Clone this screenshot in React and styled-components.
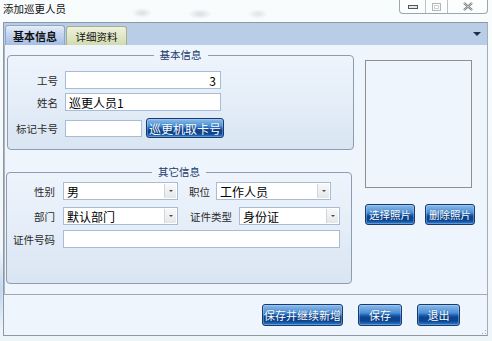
import React from 'react';
import styled, { createGlobalStyle } from 'styled-components';

const Global = createGlobalStyle`
  html, body { margin: 0; padding: 0; }
  body {
    width: 492px; height: 341px; overflow: hidden;
    font-family: "Noto Sans CJK SC", "Noto Sans", sans-serif;
    font-size: 10.5px; color: #1b1b1b;
  }
`;

const Screen = styled.div`
  width: 492px; height: 341px; display: flex; flex-direction: column;
  background:
    radial-gradient(ellipse 10px 5px at 142px 13px, rgba(120,130,140,0.25), transparent),
    radial-gradient(ellipse 12px 5px at 200px 14px, rgba(120,130,140,0.25), transparent),
    radial-gradient(ellipse 10px 5px at 258px 14px, rgba(120,130,140,0.2), transparent),
    radial-gradient(ellipse 4px 40px at 1px 290px, rgba(90,150,220,0.35), transparent),
    linear-gradient(180deg, #f9fcfd 0%, #eef5f9 100%);
`;

const TitleBar = styled.div`
  height: 22px; box-sizing: border-box; padding: 0 4px 0 3px;
  display: flex; justify-content: space-between; align-items: flex-start;
`;

const Title = styled.div`
  font-size: 10.5px; line-height: 14px; margin-top: 2px; color: #111;
`;

const Controls = styled.div`
  display: flex; height: 13px; margin-left: auto;
  border: 1px solid #9ba6b1; border-top: none; border-radius: 0 0 4px 4px;
  overflow: hidden; background: rgba(255,255,255,0.55);
`;

const CtrlBtn = styled.div`
  width: ${p => p.$w}px; display: flex; align-items: center; justify-content: center;
  border-left: ${p => (p.$first ? 'none' : '1px solid #b9c2cb')};
`;

const Window = styled.div`
  margin-left: 3px; width: 485px; height: 314px; box-sizing: border-box;
  border: 1px solid #8d98a4; border-right-color: #a3adb7;
  display: flex; flex-direction: column; background: #eef5fd;
`;

const TabStrip = styled.div`
  height: 22px; flex: none; background: #b9cde6; display: flex; align-items: flex-end;
  padding-left: 1px; padding-right: 6px;
`;

const Tab = styled.div`
  box-sizing: border-box; height: ${p => (p.$active ? 20 : 19)}px; width: ${p => p.$w}px;
  display: flex; align-items: center; justify-content: center;
  border: 1px solid ${p => (p.$active ? '#8da5c8' : '#a7ae8e')}; border-bottom: none;
  border-radius: 3px 3px 0 0;
  background: ${p => (p.$active
    ? 'linear-gradient(180deg, #e6eef9 0%, #c3d4ee 45%, #a5bde6 100%)'
    : 'linear-gradient(180deg, #eff2df 0%, #dfe6c4 55%, #d2dab0 100%)')};
  font-size: ${p => (p.$active ? 11 : 10.5)}px; font-weight: ${p => (p.$active ? 700 : 400)};
  color: #111; margin-right: 1px;
`;

const StripArrow = styled.div`
  margin-left: auto; align-self: center; margin-top: -1px;
  width: 0; height: 0;
  border-left: 4px solid transparent; border-right: 4px solid transparent;
  border-top: 4px solid #1d2d4c;
`;

const TabPage = styled.div`
  height: 250px; flex: none; box-sizing: border-box;
  border-left: 1px solid #aeb4bb; border-bottom: 1px solid #a3a8ae;
  display: flex; align-items: flex-start; background: #eef5fd;
`;

const LeftCol = styled.div`
  display: flex; flex-direction: column; padding: 3px 0 0 1px; width: 349px; flex: none;
`;

const Group = styled.fieldset`
  margin: ${p => p.$mt || 0}px 0 0 ${p => p.$ml || 0}px;
  width: ${p => p.$w}px; box-sizing: border-box; min-width: 0;
  padding: ${p => p.$pt}px 0 ${p => p.$pb}px 0;
  border: 1px solid #8d9caf; border-radius: 4px;
  background: linear-gradient(180deg, #eef4fc 0%, #e4edf8 50%, #d9e5f2 100%);
  display: flex; flex-direction: column;
`;

const Legend = styled.legend`
  margin: 0 auto; padding: 0 6px; font-size: 10.5px; line-height: 14px; color: #22396a;
`;

const Row = styled.div`
  display: flex; align-items: center; height: ${p => p.$h || 18}px; margin-top: ${p => p.$mt || 0}px;
`;

const Label = styled.div`
  width: ${p => p.$w}px; flex: none; text-align: right; font-size: 10.5px; color: #2a2a2a;
  white-space: nowrap;
`;

const SubLabel = styled.div`
  margin-left: ${p => p.$ml}px; width: ${p => p.$w}px; flex: none; font-size: 10.5px; color: #2a2a2a;
  white-space: nowrap;
`;

const TextBox = styled.div`
  box-sizing: border-box; width: ${p => p.$w}px; height: ${p => p.$h || 18}px; margin-left: ${p => p.$ml}px;
  flex: none; background: #fff; border: 1px solid #a9bcd5;
  display: flex; align-items: center; justify-content: ${p => (p.$right ? 'flex-end' : 'flex-start')};
  padding: 0 4px 0 3px; font-size: 12px; color: #000; white-space: nowrap;
`;

const Select = styled.div`
  box-sizing: border-box; width: ${p => p.$w}px; height: 18px; margin-left: ${p => p.$ml}px;
  flex: none; background: #fff; border: 1px solid #a9bcd5;
  display: flex; align-items: stretch; font-size: 12px; color: #000;
`;

const SelectText = styled.div`
  flex: 1; display: flex; align-items: center; padding-left: 3px; white-space: nowrap;
`;

const SelectBtn = styled.div`
  width: 12px; margin: 1px; flex: none; box-sizing: border-box;
  border-left: 1px solid #cfd6df;
  background: linear-gradient(180deg, #f7f8f9 0%, #e4e7eb 100%);
  display: flex; align-items: center; justify-content: center;
  &::after {
    content: ''; width: 0; height: 0;
    border-left: 2.5px solid transparent; border-right: 2.5px solid transparent;
    border-top: 2.5px solid #4a4a4a;
  }
`;

const BlueButton = styled.div`
  box-sizing: border-box; width: ${p => p.$w}px; height: ${p => p.$h || 21}px;
  margin-left: ${p => p.$ml || 0}px; flex: none;
  border: 1px solid #183a70; border-radius: 3px;
  background: linear-gradient(180deg, #8abbe9 0%, #4b8fd6 40%, #1f63b4 50%, #0b4391 62%, #0c468f 80%, #2f7fd0 100%);
  box-shadow: inset 0 0 0 1px rgba(190,220,255,0.35);
  color: #fff; font-size: ${p => p.$fs || 10.5}px;
  display: flex; align-items: center; justify-content: center; white-space: nowrap;
  text-shadow: 0 0 1px rgba(0,30,80,0.6);
`;

const RightCol = styled.div`
  display: flex; flex-direction: column; margin: 15px 0 0 10px;
`;

const Photo = styled.div`
  width: 107px; height: 128px; box-sizing: border-box;
  border: 1px solid #8e8e8e; background: #eef5fd;
`;

const PhotoButtons = styled.div`
  display: flex; gap: 10px; margin-top: 16px;
`;

const BottomBar = styled.div`
  flex: 1; display: flex; align-items: center; justify-content: flex-end;
  padding-right: 27px; gap: 15px; position: relative;
`;

const Grip = styled.svg`
  position: absolute; right: 0; bottom: 0;
`;

export default function App() {
  return (
    <Screen>
      <Global />
      <TitleBar>
        <Title>添加巡更人员</Title>
        <Controls>
          <CtrlBtn $w={25} $first>
            <svg width="10" height="4" viewBox="0 0 10 4"><rect x="0.5" y="0.5" width="9" height="3" fill="#e8e8e8" stroke="#555" /></svg>
          </CtrlBtn>
          <CtrlBtn $w={21}>
            <svg width="9" height="8" viewBox="0 0 9 8"><rect x="0.5" y="0.5" width="8" height="7" fill="none" stroke="#b5b5b5" /><rect x="2.5" y="2.5" width="4" height="3" fill="none" stroke="#cfcfcf" /></svg>
          </CtrlBtn>
          <CtrlBtn $w={39}>
            <svg width="10" height="9" viewBox="0 0 10 9"><path d="M1 1 L9 8 M9 1 L1 8" stroke="#666" strokeWidth="2.2" /><path d="M1 1 L9 8 M9 1 L1 8" stroke="#f4f4f4" strokeWidth="0.8" /></svg>
          </CtrlBtn>
        </Controls>
      </TitleBar>
      <Window>
        <TabStrip>
          <Tab $active $w={60}>基本信息</Tab>
          <Tab $w={61}>详细资料</Tab>
          <StripArrow />
        </TabStrip>
        <TabPage>
          <LeftCol>
            <Group $ml={1} $w={347} $pt={9} $pb={11}>
              <Legend>基本信息</Legend>
              <Row>
                <Label $w={50}>工号</Label>
                <TextBox $ml={7} $w={156} $right>3</TextBox>
              </Row>
              <Row $mt={4}>
                <Label $w={50}>姓名</Label>
                <TextBox $ml={7} $w={156}>巡更人员1</TextBox>
              </Row>
              <Row $mt={7} $h={20}>
                <Label $w={50}>标记卡号</Label>
                <TextBox $ml={7} $w={77} $h={17} />
                <BlueButton $ml={4} $w={78} $h={20} $fs={12}>巡更机取卡号</BlueButton>
              </Row>
            </Group>
            <Group $mt={15} $w={346} $pt={3} $pb={35}>
              <Legend>其它信息</Legend>
              <Row>
                <Label $w={48}>性别</Label>
                <Select $ml={8} $w={115}><SelectText>男</SelectText><SelectBtn /></Select>
                <SubLabel $ml={11} $w={21}>职位</SubLabel>
                <Select $ml={6} $w={115}><SelectText>工作人员</SelectText><SelectBtn /></Select>
              </Row>
              <Row $mt={7}>
                <Label $w={48}>部门</Label>
                <Select $ml={8} $w={115}><SelectText>默认部门</SelectText><SelectBtn /></Select>
                <SubLabel $ml={12} $w={42}>证件类型</SubLabel>
                <Select $ml={7} $w={101}><SelectText>身份证</SelectText><SelectBtn /></Select>
              </Row>
              <Row $mt={5}>
                <Label $w={48}>证件号码</Label>
                <TextBox $ml={8} $w={277} />
              </Row>
            </Group>
          </LeftCol>
          <RightCol>
            <Photo />
            <PhotoButtons>
              <BlueButton $w={50}>选择照片</BlueButton>
              <BlueButton $w={50}>删除照片</BlueButton>
            </PhotoButtons>
          </RightCol>
        </TabPage>
        <BottomBar>
          <BlueButton $w={81} $h={22} $fs={11}>保存并继续新增</BlueButton>
          <BlueButton $w={44} $h={22} $fs={11}>保存</BlueButton>
          <BlueButton $w={43} $h={22} $fs={11}>退出</BlueButton>
          <Grip width="8" height="8" viewBox="0 0 8 8">
            <rect x="6" y="6" width="1" height="1" fill="#9aa" />
            <rect x="3" y="6" width="1" height="1" fill="#9aa" />
            <rect x="6" y="3" width="1" height="1" fill="#9aa" />
          </Grip>
        </BottomBar>
      </Window>
    </Screen>
  );
}
